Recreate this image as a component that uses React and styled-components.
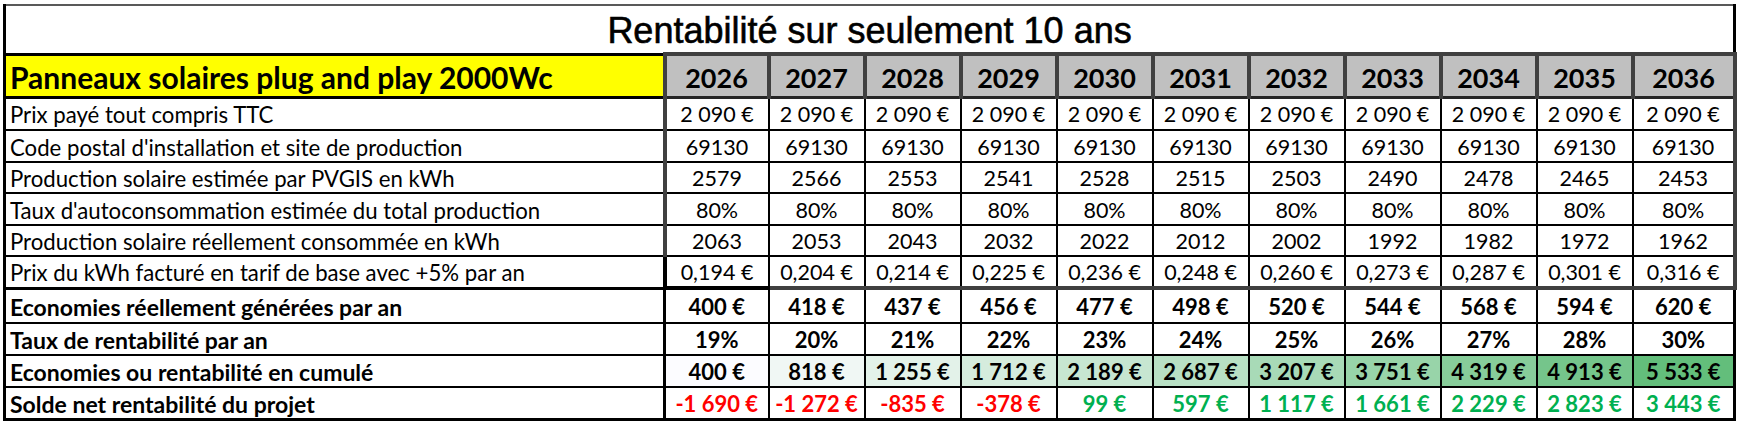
import React from 'react';
import styled, { createGlobalStyle, css } from 'styled-components';

const GlobalStyle = createGlobalStyle`
  body {
    margin: 0;
    background: #fff;
  }
`;

const Page = styled.div`
  padding: 4px 0 0 3px;
`;

const Sheet = styled.table`
  border-collapse: collapse;
  table-layout: fixed;
  width: 1730px;
  font-family: Lato, 'Open Sans', sans-serif;
  color: #000;
`;

const Row = styled.tr`
  height: ${(p) => p.$h || 32}px;
`;

const TitleCell = styled.td`
  border-top: 2px solid #595959;
  border-left: 3px solid #000;
  border-right: 3px solid #000;
  font-family: 'Liberation Sans', Arial, sans-serif;
  font-size: 36px;
  -webkit-text-stroke: 0.6px #000;
  text-align: center;
  vertical-align: middle;
  padding: 4px 0 0;
`;

const HeadLabel = styled.td`
  background: #ffff00;
  border: 3px solid #000;
  border-right: none;
  font-weight: 700;
  font-size: 30px;
  padding: 2px 0 0 4px;
  white-space: nowrap;
`;

const YearCell = styled.td`
  background: #c0c0c0;
  border: 4px solid #404040;
  border-bottom: 3px solid #262626;
  font-weight: 700;
  font-size: 27px;
  text-align: center;
  padding-top: 4px;
`;

const Label = styled.td`
  border: 2px solid #000;
  border-left: 3px solid #000;
  font-size: ${(p) => (p.$bold ? 23 : 22.2)}px;
  font-weight: ${(p) => (p.$bold ? 700 : 400)};
  padding: 2px 0 0 4px;
  white-space: nowrap;
  ${(p) =>
    p.$end &&
    css`
      border-bottom: 3px solid #000;
    `}
  ${(p) =>
    p.$last &&
    css`
      border-bottom: 4px solid #000;
    `}
`;

const Value = styled.td`
  border: 2px solid #000;
  font-size: ${(p) => (p.$bold ? 22 : 21.5)}px;
  font-weight: ${(p) => (p.$bold ? 700 : 400)};
  color: ${(p) => p.$color || '#000'};
  text-align: center;
  padding-top: 2px;
  white-space: nowrap;
  ${(p) =>
    p.$first &&
    css`
      border-left: ${p.$bold ? '3px solid #000' : '4px solid #404040'};
    `}
  ${(p) =>
    p.$lastCol &&
    css`
      border-right: ${p.$bold ? '3px solid #000' : '4px solid #404040'};
    `}
  ${(p) =>
    p.$end &&
    css`
      border-bottom: 4px solid #404040;
    `}
  ${(p) =>
    p.$mark &&
    css`
      border-left: 4px solid #000;
      border-bottom: 4px solid #000;
    `}
  ${(p) =>
    p.$last &&
    css`
      border-bottom: 4px solid #000;
    `}
`;

const years = [2026, 2027, 2028, 2029, 2030, 2031, 2032, 2033, 2034, 2035, 2036];

const fill = (v) => Array(11).fill(v);

const plainRows = [
  { label: 'Prix payé tout compris TTC', values: fill('2 090 €'), h: 33 },
  { label: "Code postal d'installation et site de production", values: fill('69130') },
  {
    label: 'Production solaire estimée par PVGIS en kWh',
    values: ['2579', '2566', '2553', '2541', '2528', '2515', '2503', '2490', '2478', '2465', '2453'],
    h: 31,
  },
  { label: "Taux d'autoconsommation estimée du total production", values: fill('80%') },
  {
    label: 'Production solaire réellement consommée en kWh',
    values: ['2063', '2053', '2043', '2032', '2022', '2012', '2002', '1992', '1982', '1972', '1962'],
    h: 31,
  },
  {
    label: 'Prix du kWh facturé en tarif de base avec +5% par an',
    values: ['0,194 €', '0,204 €', '0,214 €', '0,225 €', '0,236 €', '0,248 €', '0,260 €', '0,273 €', '0,287 €', '0,301 €', '0,316 €'],
  },
];

const savings = [400, 418, 437, 456, 477, 498, 520, 544, 568, 594, 620];
const rates = ['19%', '20%', '21%', '22%', '23%', '24%', '25%', '26%', '27%', '28%', '30%'];
const cumul = [400, 818, 1255, 1712, 2189, 2687, 3207, 3751, 4319, 4913, 5533];
const PRICE = 2090;

const euro = (n) => {
  const s = Math.abs(n)
    .toString()
    .replace(/\B(?=(\d{3})+(?!\d))/g, '\u00a0');
  return `${n < 0 ? '-' : ''}${s}\u00a0€`;
};

// échelle de couleur blanc -> vert façon Excel
const scale = (v) => {
  const min = cumul[0];
  const max = cumul[cumul.length - 1];
  const t = (v - min) / (max - min);
  const mix = (a, b) => Math.round(a + (b - a) * t);
  return `rgb(${mix(252, 99)}, ${mix(252, 190)}, ${mix(255, 123)})`;
};

const App = () => {
  return (
    <Page>
      <GlobalStyle />
      <Sheet>
        <colgroup>
          <col style={{ width: 660 }} />
          <col style={{ width: 104 }} />
          {years.slice(1, 10).map((y) => (
            <col key={y} style={{ width: 96 }} />
          ))}
          <col style={{ width: 102 }} />
        </colgroup>
        <tbody>
          <Row $h={47}>
            <TitleCell colSpan={12}>Rentabilité sur seulement 10 ans</TitleCell>
          </Row>
          <Row $h={43}>
            <HeadLabel>Panneaux solaires plug and play 2000Wc</HeadLabel>
            {years.map((y) => (
              <YearCell key={y}>{y}</YearCell>
            ))}
          </Row>
          {plainRows.map((r, ri) => {
            const end = ri === plainRows.length - 1;
            return (
              <Row key={r.label} $h={r.h}>
                <Label $end={end}>{r.label}</Label>
                {r.values.map((v, i) => (
                  <Value
                    key={i}
                    $first={i === 0}
                    $lastCol={i === 10}
                    $end={end}
                    $mark={end && i === 0}
                  >
                    {v.replace(/ /g, '\u00a0')}
                  </Value>
                ))}
              </Row>
            );
          })}
          <Row $h={35}>
            <Label $bold>Economies réellement générées par an</Label>
            {savings.map((v, i) => (
              <Value key={i} $bold $first={i === 0} $lastCol={i === 10}>
                {euro(v)}
              </Value>
            ))}
          </Row>
          <Row>
            <Label $bold>Taux de rentabilité par an</Label>
            {rates.map((v, i) => (
              <Value key={i} $bold $first={i === 0} $lastCol={i === 10}>
                {v}
              </Value>
            ))}
          </Row>
          <Row $h={31}>
            <Label $bold>Economies ou rentabilité en cumulé</Label>
            {cumul.map((v, i) => (
              <Value
                key={i}
                $bold
                $first={i === 0}
                $lastCol={i === 10}
                style={{ background: scale(v) }}
              >
                {euro(v)}
              </Value>
            ))}
          </Row>
          <Row $h={31}>
            <Label $bold $last>
              Solde net rentabilité du projet
            </Label>
            {cumul.map((v, i) => {
              const net = v - PRICE;
              return (
                <Value
                  key={i}
                  $bold
                  $last
                  $first={i === 0}
                  $lastCol={i === 10}
                  $color={net < 0 ? '#ff0000' : '#00b050'}
                >
                  {euro(net)}
                </Value>
              );
            })}
          </Row>
        </tbody>
      </Sheet>
    </Page>
  );
};

export default App;
